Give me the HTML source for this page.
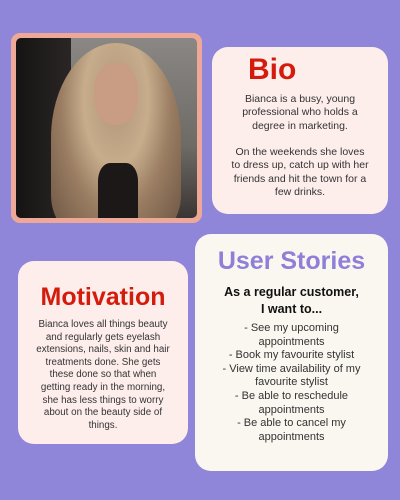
<!DOCTYPE html>
<html><head><style>
*{margin:0;padding:0;box-sizing:border-box}
body{width:400px;height:500px;background:#8f85d9;position:relative;overflow:hidden;font-family:"Liberation Sans",sans-serif}
.c{position:absolute;border-radius:16px;text-align:center}
.photo{position:absolute;left:11px;top:33px;width:191px;height:190px;background:#eda898;border-radius:9px;padding:5px}
.img{width:100%;height:100%;border-radius:5px;overflow:hidden;position:relative;background:linear-gradient(180deg,#8a8784 0%,#6e6a66 60%,#3a3532 100%)}
.bio{left:212px;top:47px;width:176px;height:167px;background:#fdeeec}
.us{left:195px;top:234px;width:193px;height:237px;background:#faf7f0}
.mo{left:18px;top:261px;width:170px;height:183px;background:#fdeeec}
h1{font-weight:bold;color:#d41c0c;white-space:nowrap}
p{color:#333;font-size:10.5px;line-height:13.3px;white-space:nowrap}
</style></head><body>
<div class="photo"><div class="img">
<div style="position:absolute;left:0;top:0;width:55px;height:190px;background:linear-gradient(90deg,#151313,#2a2625)"></div>
<div style="position:absolute;left:35px;top:5px;width:130px;height:190px;border-radius:50% 50% 20% 20%;background:radial-gradient(ellipse at 50% 30%,#b09478 0%,#c7ad8c 35%,#9a7d62 60%,#6b5443 100%)"></div>
<div style="position:absolute;left:78px;top:25px;width:44px;height:62px;border-radius:45%;background:#c99c84"></div>
<div style="position:absolute;left:82px;top:125px;width:40px;height:60px;background:#1c1818;border-radius:30% 30% 0 0"></div>
</div></div>
<div class="c bio">
<h1 style="position:absolute;left:36px;top:6px;font-size:30px">Bio</h1>
<p style="position:absolute;left:0;width:176px;top:46px">Bianca is a busy, young<br>professional who holds a<br>degree in marketing.<br><br>On the weekends she loves<br>to dress up, catch up with her<br>friends and hit the town for a<br>few drinks.</p>
</div>
<div class="c us">
<h1 style="position:absolute;left:0;width:193px;top:13px;font-size:25px;color:#8f7fd8">User Stories</h1>
<div style="position:absolute;left:0;width:193px;top:50px;font-weight:bold;font-size:12.5px;line-height:17px;color:#111;white-space:nowrap">As a regular customer,<br>I want to...</div>
<p style="position:absolute;left:0;width:193px;top:88px;font-size:11px;line-height:13.6px">- See my upcoming<br>appointments<br>- Book my favourite stylist<br>- View time availability of my<br>favourite stylist<br>- Be able to reschedule<br>appointments<br>- Be able to cancel my<br>appointments</p>
</div>
<div class="c mo">
<h1 style="position:absolute;left:0;width:170px;top:22px;font-size:25px">Motivation</h1>
<p style="position:absolute;left:0;width:170px;top:58px;font-size:9.8px;line-height:12.6px">Bianca loves all things beauty<br>and regularly gets eyelash<br>extensions, nails, skin and hair<br>treatments done. She gets<br>these done so that when<br>getting ready in the morning,<br>she has less things to worry<br>about on the beauty side of<br>things.</p>
</div>
</body></html>
